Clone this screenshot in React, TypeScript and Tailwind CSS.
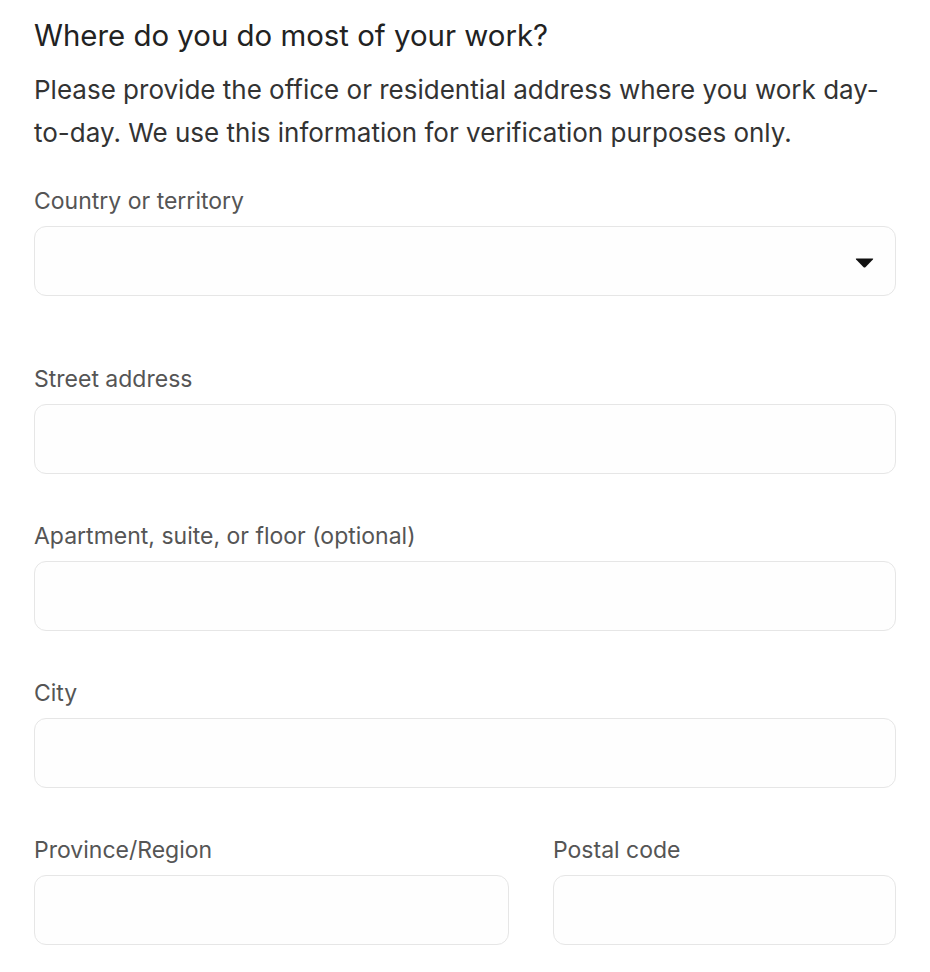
import React from 'react';

function Field({ label, select = false }: { label: string; select?: boolean }) {
  return (
    <div>
      <label className="block text-[23px] leading-[26px] text-[#555555] mb-[12px]">{label}</label>
      <div className="relative h-[70px] rounded-[12px] border border-[#e6e6e6] bg-[#fefefe]">
        {select && (
          <svg
            className="absolute right-[21px] top-[31px]"
            width="19"
            height="10"
            viewBox="0 0 19 10"
          >
            <path d="M1.5 0.5 H17.5 Q18.8 0.5 17.9 1.5 L10.4 9.2 Q9.5 10 8.6 9.2 L1.1 1.5 Q0.2 0.5 1.5 0.5 Z" fill="#111" />
          </svg>
        )}
      </div>
    </div>
  );
}

export default function App() {
  return (
    <div className="min-h-screen bg-white px-[34px] pt-[19px] font-['Inter',sans-serif]">
      <h1 className="text-[29.4px] leading-[34px] text-[#222222]">Where do you do most of your work?</h1>
      <p className="mt-[15px] text-[26px] leading-[43px] text-[#333333]">
        Please provide the office or residential address where you work day-to-day. We use this information for
        verification purposes only.
      </p>

      <div className="mt-[34px] flex flex-col gap-[49px]">
        <div className="pb-[21px]">
          <Field label="Country or territory" select />
        </div>
        <Field label="Street address" />
        <Field label="Apartment, suite, or floor (optional)" />
        <Field label="City" />
        <div className="grid grid-cols-[475px_1fr] gap-[44px]">
          <Field label="Province/Region" />
          <Field label="Postal code" />
        </div>
      </div>
    </div>
  );
}
